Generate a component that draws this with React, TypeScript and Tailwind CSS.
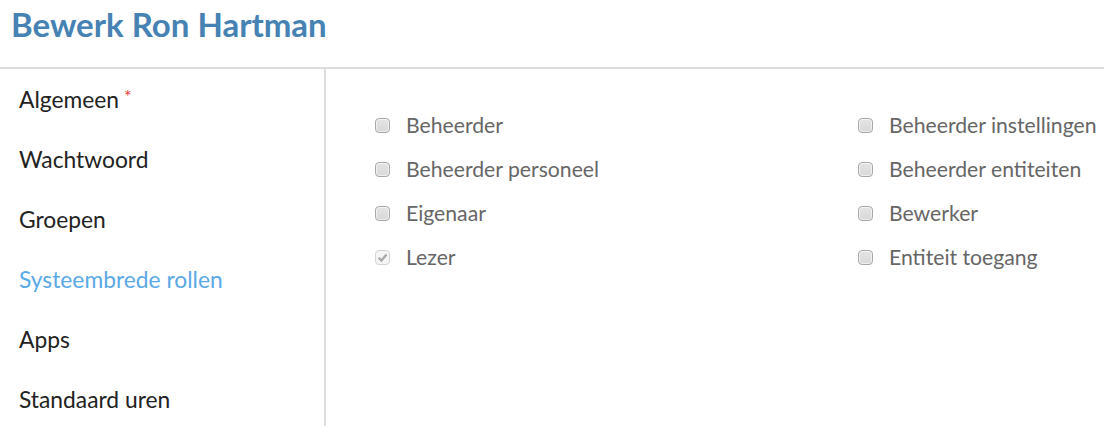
const NAV = [
  { label: "Algemeen", required: true },
  { label: "Wachtwoord" },
  { label: "Groepen" },
  { label: "Systeembrede rollen", active: true },
  { label: "Apps" },
  { label: "Standaard uren" },
];

const LEFT_ROLES = [
  { label: "Beheerder" },
  { label: "Beheerder personeel" },
  { label: "Eigenaar" },
  { label: "Lezer", checked: true },
];

const RIGHT_ROLES = [
  { label: "Beheerder instellingen" },
  { label: "Beheerder entiteiten" },
  { label: "Bewerker" },
  { label: "Entiteit toegang" },
];

function Box({ checked }: { checked?: boolean }) {
  return (
    <span
      className={
        "flex h-[15px] w-[15px] shrink-0 items-center justify-center rounded-[4px] border " +
        (checked
          ? "border-[#d4d4d4] bg-[#f5f5f5]"
          : "border-[#a8a8a8] bg-gradient-to-b from-[#e4e4e4] to-[#d8d8d8] shadow-[inset_0_0_0_1px_rgba(255,255,255,0.6)]")
      }
    >
      {checked && (
        <svg width="11" height="11" viewBox="0 0 10 10">
          <path d="M1.5 5.2 L4 7.8 L8.7 2.2" fill="none" stroke="#a8a8a8" strokeWidth="2" />
        </svg>
      )}
    </span>
  );
}

function RoleList({ roles }: { roles: { label: string; checked?: boolean }[] }) {
  return (
    <div className="flex flex-col gap-[19px]">
      {roles.map((r) => (
        <label key={r.label} className="flex h-[25px] items-center">
          <Box checked={r.checked} />
          <span className="ml-[16px] text-[21.2px] text-[#666666]">{r.label}</span>
        </label>
      ))}
    </div>
  );
}

export default function App() {
  return (
    <div className="h-[426px] w-[1104px] overflow-hidden bg-white font-['Lato','Liberation_Sans',sans-serif]">
      <h1 className="h-[67px] pl-[11px] pt-[3px] text-[33px] font-bold leading-[42px] text-[#4682b4]">
        Bewerk Ron Hartman
      </h1>
      <div className="flex border-t-2 border-[#dddddd]">
        <nav className="w-[324px] shrink-0 pl-[19px] pt-[15px]">
          {NAV.map((n) => (
            <div
              key={n.label}
              className={
                "h-[60px] text-[22.8px] leading-[30px] " +
                (n.active ? "text-[#5aa9e6]" : "text-[#222222]")
              }
            >
              {n.label}
              {n.required && (
                <span className="relative -top-[5px] ml-[5px] text-[18px] text-[#f03a3a]">*</span>
              )}
            </div>
          ))}
        </nav>
        <div className="h-[360px] w-[2px] bg-[#dddddd]" />
        <div className="flex pl-[49px] pt-[44px]">
          <div className="w-[483px]">
            <RoleList roles={LEFT_ROLES} />
          </div>
          <RoleList roles={RIGHT_ROLES} />
        </div>
      </div>
    </div>
  );
}
